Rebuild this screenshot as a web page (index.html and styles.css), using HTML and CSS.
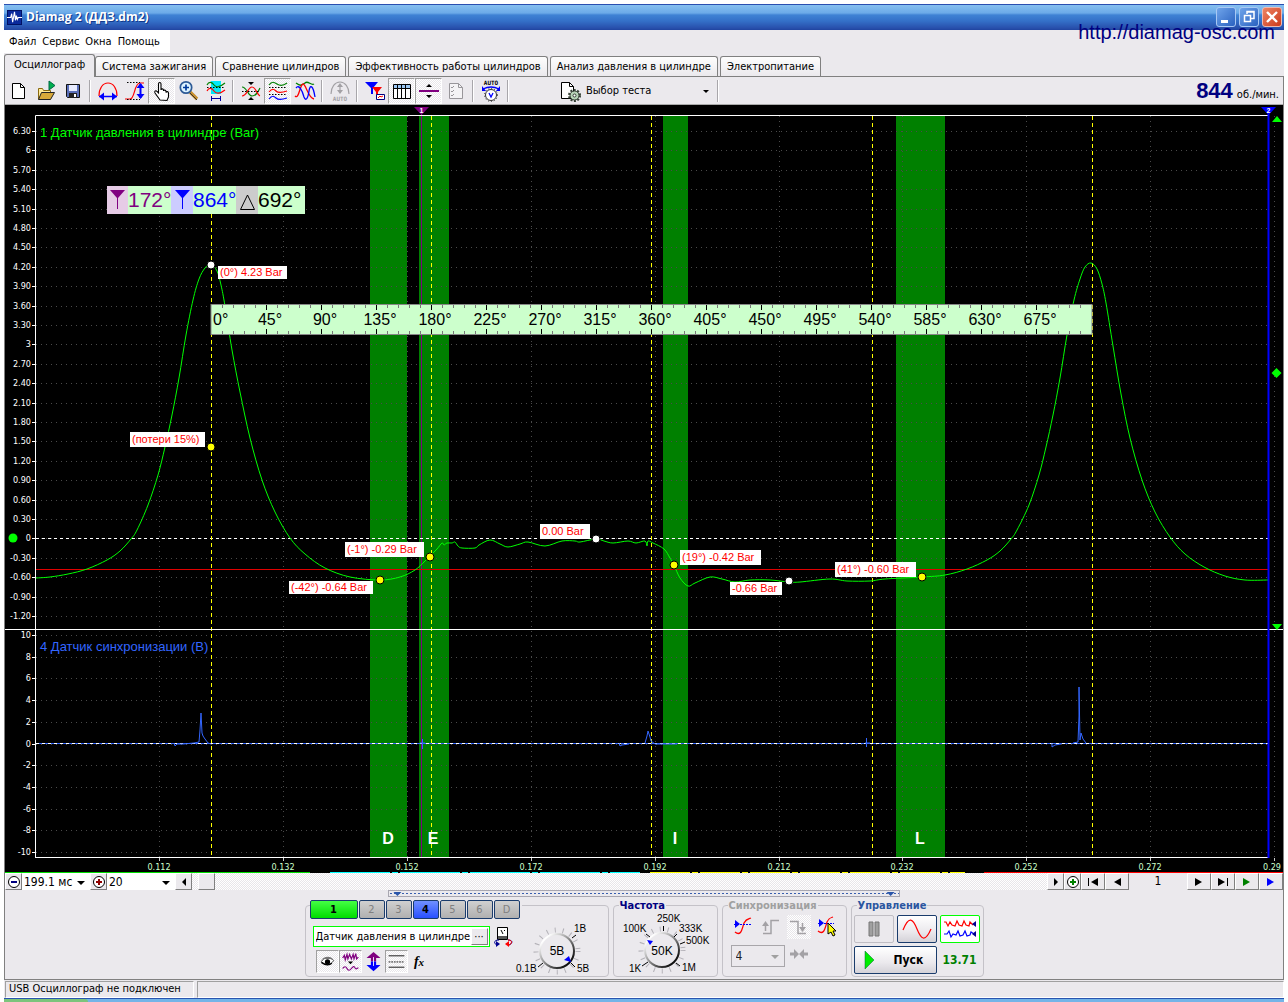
FILE: index.html
```html
<!DOCTYPE html>
<html lang="ru">
<head>
<meta charset="utf-8">
<title>Diamag 2 (ДДЗ.dm2)</title>
<link rel="stylesheet" href="styles.css">
</head>
<body>
<div class="window">
  <header class="titlebar">
    <svg class="app-icon" viewBox="0 0 16 16"><rect width="16" height="16" fill="#0a2a9c"/><rect x=".5" y=".5" width="15" height="15" fill="none" stroke="#001060"/><path d="M0 8h4l1-4 1 9 2-11 1 9 1-5 1 4 1-2h4" fill="none" stroke="#fff" stroke-width="1.2"/></svg>
    <h1>Diamag 2 (ДДЗ.dm2)</h1>
    <div class="win-buttons">
      <button class="win-btn" aria-label="Свернуть"><svg viewBox="0 0 18 18"><path d="M4 12h7v3H4z" fill="#fff"/></svg></button>
      <button class="win-btn" aria-label="Восстановить"><svg viewBox="0 0 18 18"><path d="M7 6V3.500h7v7h-3M4.500 7.500h6v6h-6zM4 7.500h7M7 4h7" fill="none" stroke="#fff" stroke-width="1.500"/></svg></button>
      <button class="win-btn close" aria-label="Закрыть"><svg viewBox="0 0 18 18"><path d="M4 4l10 10M14 4L4 14" stroke="#fff" stroke-width="2.400"/></svg></button>
    </div>
    <a class="site-link" href="http://diamag-osc.com">http://diamag-osc.com</a>
  </header>

  <nav class="menubar">
    <button>Файл</button><button>Сервис</button><button>Окна</button><button>Помощь</button>
  </nav>

  <nav class="tabs">
    <button class="tab active">Осциллограф</button>
    <button class="tab">Система зажигания</button>
    <button class="tab">Сравнение цилиндров</button>
    <button class="tab">Эффективность работы цилиндров</button>
    <button class="tab">Анализ давления в цилиндре</button>
    <button class="tab">Электропитание</button>
  </nav>

  <main class="panel">
    <div class="toolbar">
      <button class="tool" aria-label="Новый"><svg viewBox="0 0 24 24"><path d="M5.500 4.500h8l4 4v11h-12z" fill="#fff" stroke="#000"/><path d="M13.500 4.500v4h4" fill="none" stroke="#000"/></svg></button>
      <button class="tool" aria-label="Открыть"><svg viewBox="0 0 24 24"><path d="M4.500 20V9.500h4l1 2h7V20z" fill="#ffeb9c" stroke="#8a6a10"/><path d="M4.500 20.500l3-7h13l-4 7z" fill="#d8a93a" stroke="#222"/><path d="M15 2v9l6-4.500z" fill="#00b050" stroke="#064"/></svg></button>
      <button class="tool" aria-label="Сохранить"><svg viewBox="0 0 24 24"><path d="M5.500 5.500h13v13h-12l-1-1z" fill="#5b6fb8" stroke="#111"/><path d="M8 6h8v6H8z" fill="#e8ecff"/><path d="M8 14h8v5H8z" fill="#222"/><path d="M13 15h2v3h-2z" fill="#fff"/></svg></button>
      <span class="sep"></span>
      <button class="tool" aria-label="Период"><svg viewBox="0 0 24 24"><path d="M3 17C3 9 7 4 12 4s9 5 9 13" fill="none" stroke="red" stroke-width="1.200"/><path d="M3 17.500h18" stroke="#00f" stroke-width="1.500"/><path d="M3 17.500l5-4v8zM21 17.500l-5-4v8z" fill="#00f"/></svg></button>
      <button class="tool" aria-label="Амплитуда"><svg viewBox="0 0 24 24"><path d="M2 20h5c5 0 4-16 10-16h4" fill="none" stroke="red" stroke-width="1.200"/><path d="M4 3.500h13M4 20.500h13" stroke="#000" stroke-dasharray="1.500 1.500"/><path d="M17.500 5v14" stroke="#00f" stroke-width="2"/><path d="M17.500 4l4 5h-8zM17.500 20l4-5h-8z" fill="#00f"/></svg></button>
      <button class="tool on" aria-label="Рука"><svg viewBox="0 0 24 24"><path d="M10 21l-5-7c-1-2 1-3 2-1.500L8.500 14V5c0-2 2.500-2 2.500 0v6c0-1.500 2.500-1.500 2.500 0v1c0-1.500 2.500-1 2.500.5v1c.5-1.500 2.500-1 2.500.5v4l-1.500 3.500z" fill="#fff" stroke="#000" stroke-width="1.100"/></svg></button>
      <button class="tool" aria-label="Лупа"><svg viewBox="0 0 24 24"><path d="M13 13l7 7" stroke="#c89030" stroke-width="3.500"/><path d="M13 14l7 7" stroke="#333"/><circle cx="9" cy="8.500" r="5.700" fill="#dcf3ff" stroke="#2d5a96" stroke-width="1.700"/><path d="M6 8.500h6M9 5.500v6" stroke="#003a9c" stroke-width="1.700"/></svg></button>
      <button class="tool" aria-label="Интервал"><svg viewBox="0 0 24 24"><path d="M7 2h10v13H7z" fill="#00e8f8"/><path d="M3 6c2-4 5-3 7 0s6 2 11-2" fill="none" stroke="#008000" stroke-width="1.200"/><path d="M3 12c2-4 5-3 7 0s6 3 11-1" fill="none" stroke="red" stroke-width="1.200"/><path d="M3 8.500h18" stroke="#000" stroke-dasharray="1.500 1.500"/><path d="M7 19.500h10M7.500 17v5M16.500 17v5" stroke="#0000a0"/></svg></button>
      <span class="sep"></span>
      <button class="tool" aria-label="Свести"><svg viewBox="0 0 24 24"><path d="M3 8c5 0 6 9 10 9 4 0 6-4 8-8" fill="none" stroke="#008000" stroke-width="1.200"/><path d="M3 17C8 17 9 8 13 8c4 0 5 8 8 9" fill="none" stroke="red" stroke-width="1.200"/><path d="M3 12.500h18" stroke="#000" stroke-dasharray="1.500 1.500"/><path d="M12 6L9 3h6zM12 18l-3 3h6z"/></svg></button>
      <button class="tool on" aria-label="Развести"><svg viewBox="0 0 24 24" fill="none" stroke-width="1.200"><path d="M3 6c3-4 5-3 8-1s6 2 10-1" stroke="#008000"/><path d="M3 13c3-4 5-3 7-1s5 2 11 0" stroke="red"/><path d="M3 20c3-4 5-3 7-1s5 2 11 0" stroke="#00f"/><path d="M3 8.500h18M3 15.500h18" stroke="#000" stroke-dasharray="1.500 1.500"/></svg></button>
      <button class="tool" aria-label="Наложить"><svg viewBox="0 0 24 24" fill="none" stroke-width="1.300"><path d="M3 4c4 3 5 3 9 0 3-3 6 3 9 1" stroke="#008000"/><path d="M2 17c4 4 5-12 8-12s5 14 11 15" stroke="red"/><path d="M3 9c3-4 6 2 8 9 2 5 4 1 5-6s4-6 6 6" stroke="#00f"/></svg></button>
      <span class="sep"></span>
      <button class="tool" aria-label="Авто" disabled><svg viewBox="0 0 24 24"><path d="M3 15C3 8 7 3 12 3s9 5 9 12M12 6v8" fill="none" stroke="#a3a1a5" stroke-width="1.200"/><path d="M12 4l3 4H9zM12 15l3-4H9z" fill="#a3a1a5"/><text x="12" y="22" text-anchor="middle" class="t6" fill="#a3a1a5">AUTO</text></svg></button>
      <span class="sep"></span>
      <button class="tool" aria-label="Фильтр"><svg viewBox="0 0 24 24"><path d="M2 3h13l-5 6v6H8V9z" fill="#00f"/><path d="M9 8h10l-4 5v4l-2-1v-3z" fill="red"/><path d="M13.500 15.500h8v5h-8z" fill="#fff" stroke="#000080"/><path d="M15 19l2-2 1 1 2-1" fill="none" stroke="red"/></svg></button>
      <button class="tool on" aria-label="Таблица"><svg viewBox="0 0 24 24"><path d="M3.500 5.500h17v14h-17z" fill="#fff" stroke="#000"/><path d="M4 6h16v3H4z" fill="#9cc8f4"/><path d="M3 9.500h18M7.500 6v14M11.500 6v14M15.500 6v14" stroke="#000"/></svg></button>
      <button class="tool on" aria-label="Граница"><svg viewBox="0 0 24 24"><path d="M2 11h20v2H2z" fill="#800080"/><path d="M12 5l3 3H9zM12 19l3-3H9z"/></svg></button>
      <button class="tool" aria-label="Список" disabled><svg viewBox="0 0 24 24"><path d="M5.500 4.500h9l4 4v11h-13z" fill="#f4f3f5" stroke="#98969a"/><path d="M14.500 4.500v4h4M7 8l1 1 2-2M7 12l1 1 2-2M7 16l1 1 2-2" fill="none" stroke="#98969a"/></svg></button>
      <span class="sep"></span>
      <button class="tool" aria-label="Авто напряжение"><svg viewBox="0 0 24 24"><text x="12" y="6" text-anchor="middle" class="t6">AUTO</text><path d="M4 10q8-4 16 0" fill="none" stroke="#00f" stroke-width="1.300"/><path d="M3 7v5h4zM21 7v5h-4z" fill="#00f"/><circle cx="12" cy="16" r="5.500" fill="#fff" stroke="#333"/><circle cx="12" cy="16" r="6.500" fill="none" stroke="#333" stroke-dasharray="1 2"/><path d="M10 14l2 4 2-4" fill="none" stroke="#00f" stroke-width="1.300"/></svg></button>
      <span class="sep"></span>
      <label class="test-pick">
        <svg viewBox="0 0 24 24"><path d="M3.500 3.500h8l4 4v12h-12z" fill="#fff" stroke="#000"/><path d="M11.500 3.500v4h4" fill="none" stroke="#000"/><circle cx="16.500" cy="16.500" r="4.500" fill="#b8d4b8" stroke="#354035"/><circle cx="16.500" cy="16.500" r="5.500" fill="none" stroke="#354035" stroke-width="2" stroke-dasharray="2 1.500"/><circle cx="16.500" cy="16.500" r="1.500" fill="#fff" stroke="#354035"/></svg>
        <select aria-label="Выбор теста"><option>Выбор теста</option></select>
      </label>
      <span class="sep"></span>
      <div class="rpm"><strong>844</strong> об./мин.</div>
    </div>

    <svg class="chart" viewBox="5 105 1278 768" role="img" aria-label="Осциллограмма">
      <rect x="5" y="105" width="1278" height="768"/>
      <g fill="#008000"><rect x="370" y="116" width="37" height="741"/><rect x="419" y="116" width="30" height="741"/><rect x="663" y="116" width="25" height="741"/><rect x="896" y="116" width="49" height="741"/></g>
      <g id="grid"></g>
      <path d="M421.500 114v743" stroke="#800080"/>
      <path d="M36 538.500h1232" stroke="#fff" stroke-dasharray="3 3"/>
      <path d="M36 569.500h1232" stroke="#e00000"/>
      <path d="M211.500 116v741M431.500 116v741M651.500 116v741M872.500 116v741M1092.500 116v741" stroke="#ff0" stroke-dasharray="4 3"/>
      <path id="pressure" class="trace" stroke="#0f0"/>
      <path d="M36 743.500h1232" stroke="#36f"/>
      <path d="M36 743.500h1232" stroke="#fff" stroke-dasharray="3 3"/>
      <path class="trace" stroke="#36f" d="M174 743l1 3 2-2h6l11-1 5-1 1-12 1-17 1 20 1 3 2 3 3 4 3 1M420 743h5M422.500 739v10M619 743l1 3 2-1 7-1M645 743l2-7 1-5 2 6 1 4 4 3h22M866.500 738v9M865 743h5M1052 743v4l3-2 6-1M1073 743l5-1 1-26v-29l1 53 1-7 2 6 3 4"/>
      <path d="M35.500 857V115.500H1268M35 857.500h1234M5 629.500h1278" fill="none" stroke="#fff"/>
      <path d="M1268.500 112v746" stroke="#00f" stroke-width="2"/>
      <g id="axes"></g>
      <path d="M414 107h15l-7.500 8z" fill="#800080"/><path d="M1261 107h15l-7.500 8z" fill="#00f"/>
      <text x="421.500" y="113" class="mark">1</text><text x="1268.500" y="113" class="mark">2</text>
      <g fill="#0f0"><circle cx="13" cy="538" r="4.500"/><path d="M1272 122h10l-5-6zM1272 624h10l-5 6zM1271.500 373l5-5 5 5-5 5z"/></g>
      <text x="40" y="137" class="channel" fill="#0f0">1 Датчик давления в цилиндре (Bar)</text>
      <text x="40" y="651" class="channel" fill="#36f">4 Датчик синхронизации (В)</text>
      <g class="band"><text x="388" y="844">D</text><text x="433" y="844">E</text><text x="675" y="844">I</text><text x="920" y="844">L</text></g>
      <rect x="107" y="186" width="198" height="28" fill="#cfc"/>
      <rect x="107" y="186" width="21" height="28" fill="#e6cbe6"/><rect x="171" y="186" width="22" height="28" fill="#ccf"/><rect x="236" y="186" width="22" height="28" fill="#ccc"/>
      <path d="M110 190h15l-7 8v11h-1v-11z" fill="#800080"/><path d="M175 190h15l-7 8v11h-1v-11z" fill="#00f"/>
      <path d="M240.500 209.500h14L247.500 195z" fill="none" stroke="#000"/>
      <g class="readout"><text x="128" y="207" fill="#800080">172°</text><text x="193" y="207" fill="#00f">864°</text><text x="258" y="207">692°</text></g>
      <rect x="211" y="304.500" width="881" height="30" fill="#cfc" stroke="#888"/>
      <g id="ruler"></g>
      <g id="callouts"></g>
      <path d="M5 872.500h305" stroke="#0d0"/><path d="M330 872.500h310" stroke="#0ff" stroke-dasharray="60 2 6 2"/><path d="M650 872.500h315" stroke="#ff0" stroke-dasharray="40 2 6 2"/><path d="M984 872.500h299" stroke="red"/>
    </svg>

    <div class="scrollrow">
      <button class="sb" aria-label="Уменьшить"><svg viewBox="0 0 16 16"><circle cx="8" cy="8" r="5.500" fill="#fff" stroke="#000"/><path d="M5 7h6v2H5z" fill="#000080"/></svg></button>
      <span class="pick wide"><select aria-label="Развертка"><option>199.1 мс</option></select></span>
      <button class="sb" aria-label="Увеличить"><svg viewBox="0 0 16 16"><circle cx="8" cy="8" r="5.500" fill="#fff" stroke="#000"/><path d="M5 7h6v2H5zM7 5h2v6H7z" fill="#900000"/></svg></button>
      <span class="pick wide"><select aria-label="Масштаб"><option>20</option></select></span>
      <button class="sb" aria-label="Влево"><svg viewBox="0 0 16 16"><path d="M10 4v8L6 8z"/></svg></button>
      <div class="track"><span class="thumb"></span></div>
      <button class="sb" aria-label="Вправо"><svg viewBox="0 0 16 16"><path d="M6 4v8l4-4z"/></svg></button>
      <button class="sb" aria-label="Добавить"><svg viewBox="0 0 16 16"><circle cx="8" cy="8" r="5.500" fill="#fff" stroke="#000"/><path d="M5 7h6v2H5zM7 5h2v6H7z" fill="#008000"/></svg></button>
      <button class="sb nav" aria-label="В начало"><svg viewBox="0 0 16 16"><path d="M3 4h1v8H3zM13 4v8L6 8z"/></svg></button>
      <button class="sb nav" aria-label="Назад"><svg viewBox="0 0 16 16"><path d="M12 4v8L5 8z"/></svg></button>
      <output class="page">1</output>
      <button class="sb nav" aria-label="Вперед"><svg viewBox="0 0 16 16"><path d="M4 4v8l7-4z"/></svg></button>
      <button class="sb nav" aria-label="В конец"><svg viewBox="0 0 16 16"><path d="M3 4v8l7-4zM12 4h1v8h-1z"/></svg></button>
      <button class="sb nav" aria-label="Просмотр"><svg viewBox="0 0 16 16"><path d="M4 4v8l7-4z" fill="#008000"/></svg></button>
      <button class="sb nav" aria-label="Запись"><svg viewBox="0 0 16 16"><path d="M4 4v8l7-4z" fill="#00f"/></svg></button>
    </div>
    <div class="splitter"></div>

    <div class="controls">
      <section class="group channel-group">
        <div>
          <div class="channels">
            <button class="ch one">1</button><button class="ch">2</button><button class="ch">3</button><button class="ch four">4</button><button class="ch">5</button><button class="ch">6</button><button class="ch">D</button>
          </div>
          <div class="sensor-row">
            <div class="sensor"><input aria-label="Датчик" value="Датчик давления в цилиндре"><button>···</button></div>
            <svg width="20" height="22" viewBox="0 0 20 22"><path d="M4.500 1.500h10v12h-10z" fill="#fff" stroke="#000"/><path d="M5 10h9v3H5z" fill="#555"/><path d="M8 4l2 4M12 4l-1 1" stroke="#000"/><path d="M6 14c-6 0-5 4-2 5M15 14c6 0 4 4 1 5" fill="none" stroke="#000090"/><path d="M3 15v6l4-3z" fill="#000090"/><path d="M15 14c5 0 4 4 1 5" fill="none" stroke="red"/><path d="M16 15v6l-4-3z" fill="red"/></svg>
          </div>
          <div class="options">
            <button class="tool on" aria-label="Видимость"><svg viewBox="0 0 24 24"><path d="M5 12c3-5 10-6 14-1-4 6-10 6-14 1z" fill="#fff" stroke="#333"/><path d="M5 10c4-4 10-5 14 0l-4-1H8z" fill="#777"/><circle cx="12" cy="12.500" r="3"/><path d="M5 13q7 5 12 1" fill="none" stroke="#000" stroke-width="1.500"/></svg></button>
            <button class="tool on" aria-label="Сглаживание"><svg viewBox="0 0 24 24"><path d="M3 8l2-3 1 5 2-6 1 5 2-5 2 5 2-5 1 5 2-6 1 6 2-2M3 20q3-4 5 0t5 0 4-1 4 0" fill="none" stroke="#800080" stroke-width="1.400"/><path d="M9 12h6l-3 3z"/></svg></button>
            <button class="tool" aria-label="Сдвиг"><svg viewBox="0 0 24 24"><path d="M12 1l8 7h-5v4H9V8H4z" fill="#800080"/><path d="M12 23l8-7h-5v-4H9v4H4z" fill="#00f"/><path d="M12 7v10" stroke="#fff"/></svg></button>
            <button class="tool on" aria-label="Линии"><svg viewBox="0 0 24 24" stroke="#000"><path d="M3 5.500h18M3 18.500h18"/><path d="M3 12.500h18" stroke-dasharray="2 1"/></svg></button>
            <button class="tool fx" aria-label="Функция">f<sub>x</sub></button>
          </div>
        </div>
        <svg class="knob" width="86" height="66" viewBox="514 912 86 66">
          <defs><linearGradient id="rim" x1="0" y1="0" x2="1" y2="1"><stop offset=".15" stop-color="#fff"/><stop offset=".9" stop-color="#000"/></linearGradient></defs>
          <circle cx="557" cy="951" r="21" class="notches"/><circle cx="557" cy="951" r="17" fill="#ebe9ed" stroke="url(#rim)" stroke-width="2"/>
          <path d="M572 938l4-3M543 963l-5 4M571 963l4 4" stroke="#000"/><path d="M564 960l5-4 2 6z" fill="#00f"/>
          <text x="557" y="955" class="val">5В</text><text x="574" y="932">1В</text><text x="516" y="972">0.1В</text><text x="577" y="972">5В</text>
        </svg>
      </section>
      <section class="group freq">
        <h2>Частота</h2>
        <svg class="knob" width="102" height="64" viewBox="612 913 102 64">
          <circle cx="660" cy="950" r="21" class="notches"/><circle cx="660" cy="950" r="17" fill="#ebe9ed" stroke="url(#rim)" stroke-width="2"/>
          <path d="M661.500 926v5M644 934l4 3M675 934l-3 3M678 944l5-2M646 962l-6 4M674 963l4 3" stroke="#000"/><path d="M645 940l6 1-3 4z" fill="#00f"/>
          <text x="660" y="955" class="val">50K</text><text x="655" y="922">250K</text><text x="621" y="932">100K</text><text x="677" y="932">333K</text><text x="684" y="944">500K</text><text x="627" y="972">1K</text><text x="680" y="971">1M</text>
        </svg>
      </section>
      <section class="group sync">
        <h2>Синхронизация</h2>
        <div class="row">
          <button class="tool" aria-label="Уровень"><svg viewBox="0 0 24 24"><path d="M4 17c6 5 7-3 9-9 2-4 4-4 7-5" fill="none" stroke="red" stroke-width="1.300"/><path d="M3 9.500h17" stroke="#00f" stroke-dasharray="2 1"/><path d="M4 5v8l5-4z" fill="#00f"/></svg></button>
          <button class="tool" aria-label="Фронт" disabled><svg viewBox="0 0 24 24"><path d="M4 18.500h8V5.500h8M6.500 8v8" fill="none" stroke="#a3a1a5" stroke-width="1.500"/><path d="M6.500 6l3.500 5H3z" fill="#a3a1a5"/></svg></button>
          <button class="tool hatch" aria-label="Спад" disabled><svg viewBox="0 0 24 24"><path d="M3 6.500h8v12h8M15.500 8v8" fill="none" stroke="#a3a1a5" stroke-width="1.500"/><path d="M15.500 17l3.500-5h-7z" fill="#a3a1a5"/></svg></button>
          <button class="tool" aria-label="Захват"><svg viewBox="0 0 24 24"><path d="M3 16c6 5 7-3 9-9 2-4 3-4 6-5" fill="none" stroke="red" stroke-width="1.300"/><path d="M3 8.500h16" stroke="#00f" stroke-dasharray="2 1"/><path d="M4 4v8l5-4z" fill="#00f"/><path d="M13 8v11l3-2 2 4 2-1-2-4h3z" fill="#ff0" stroke="#000"/></svg></button>
        </div>
        <div class="row">
          <span class="pick sync-pick"><select aria-label="Канал синхронизации" disabled><option>4</option></select></span>
          <svg width="20" height="12" viewBox="0 0 20 12"><path d="M1 6h5M14 6h5" stroke="#a3a1a5" stroke-width="3"/><path d="M5 1v10l5-5zM15 1v10l-5-5z" fill="#a3a1a5"/></svg>
        </div>
      </section>
      <section class="group control">
        <h2>Управление</h2>
        <div class="buttons">
          <button class="big off" aria-label="Пауза" disabled><svg viewBox="0 0 36 24"><path d="M13 5h4v14h-4zM19 5h4v14h-4z" fill="#a0a0a0" stroke="#777"/></svg></button>
          <button class="big" aria-label="Синус"><svg viewBox="0 0 36 24"><path d="M4 13C10-2 14 2 18 12s8 14 14 0" fill="none" stroke="red" stroke-width="1.200"/></svg></button>
          <button class="big live" aria-label="Сигналы"><svg viewBox="0 0 36 24"><path d="M2 5h2l2 4 2-4 2 3 3 1 2-5 2 4 3 1 2-5 2 4 3 1 1-4 3 3" fill="none" stroke="red" stroke-width="1.200"/><path d="M2 17h3l2-3 2 6 2-3 3 1 2-4 2 5 3-1 2-4 2 5 3-1 1-3 3 2" fill="none" stroke="#00f" stroke-width="1.200"/><path d="M34 4v6l-4-3zM34 14v6l-4-3z" fill="#000090"/></svg></button>
          <button class="big start"><svg viewBox="0 0 12 20"><path d="M1 1v18l9-9z" fill="#0e0" stroke="#063" stroke-width=".5"/></svg>Пуск</button>
          <output class="volt">13.71</output>
        </div>
      </section>
    </div>
  </main>
  <footer class="status"><span>USB Осциллограф не подключен</span><span></span></footer>
</div>
<div class="taskbar"><span></span></div>
<script src="chart.js"></script>
</body>
</html>
```
FILE: styles.css
```css
* { box-sizing: border-box; }
body {
  margin: 0;
  background: #fff;
  color: #000;
  font: 11px/14px "DejaVu Sans Condensed", "Noto Sans", sans-serif;
}
button, input, select { font: inherit; color: inherit; margin: 0; padding: 0; border: 0; background: none; border-radius: 0; }
select { appearance: none; width: 100%; height: 100%; }
svg { display: block; }
h1, h2 { margin: 0; }

.window { margin: 4px 4px 0; background: #ebe9ed; }

.titlebar {
  position: relative;
  display: flex;
  align-items: center;
  height: 26px;
  padding: 0 2px 0 3px;
  background: linear-gradient(#2a4fb0 0 1px, #86c0f0 1px, #6caae8 9px, #3f82d4 11px, #3470c8 17px, #2850ac 24px, #2044a0);
}
.app-icon { width: 15px; height: 15px; }
.titlebar h1 { margin-left: 4px; color: #fff; font: bold 12px/20px "Open Sans", sans-serif; text-shadow: 1px 1px #123a8c; }
.win-buttons { display: flex; gap: 3px; margin-left: auto; }
.win-btn { width: 20px; height: 20px; border: 1px solid #a8c8f4; border-radius: 3px; background: linear-gradient(135deg, #6fa4ea, #2a62c0); }
.win-btn.close { border-color: #f0b8b0; background: linear-gradient(135deg, #ee8464, #cc3a1c); }
.site-link { position: absolute; right: 9px; top: 16px; color: #000080; font: 20px/24px "Liberation Sans", sans-serif; text-decoration: none; }

.menubar { display: flex; width: 166px; height: 23px; padding-left: 2px; background: #fff; }
.menubar button { padding: 0 3px; }

.tabs { display: flex; align-items: flex-end; gap: 2px; height: 23px; }
.tab { height: 20px; padding: 0 6px; border: 1px solid #808080; border-bottom: 0; border-radius: 3px 3px 0 0; background: linear-gradient(#fdfdfd, #ebe9ed); }
.tab.active { position: relative; height: 23px; margin: 0 -2px -1px 0; padding: 0 9px 2px; background: #ebe9ed; }

.panel { border: 1px solid #808080; }
.toolbar { display: flex; align-items: center; height: 28px; border-bottom: 1px solid #aaa; }
.tool { display: flex; align-items: center; justify-content: center; flex: none; width: 27px; height: 26px; }
.tool svg { flex: none; width: 24px; height: 24px; }
.tool.on { border: 1px solid; border-color: #a0a0a0 #fff #fff #a0a0a0; }
.tool.on, .hatch, .track { background: repeating-conic-gradient(#fff 0 25%, #e8e6ea 0 50%) 0 0 / 2px 2px; }
.t6 { font: bold 6px "DejaVu Sans Mono", monospace; }
.sep { flex: none; width: 2px; height: 22px; margin: 0 3px; border-left: 1px solid #a8a6aa; border-right: 1px solid #fff; }
.test-pick { position: relative; display: flex; align-items: center; width: 156px; height: 24px; margin-left: 46px; }
.test-pick svg { flex: none; width: 24px; height: 24px; margin-right: 4px; }
.test-pick::after, .pick::after { content: ""; position: absolute; right: 5px; top: 50%; margin-top: -1px; border: solid transparent; border-width: 4px 4px 0; border-top-color: #000; pointer-events: none; }
.test-pick::after { border-width: 3px 3px 0; }
.rpm { display: flex; align-items: baseline; gap: 4px; margin-left: auto; padding-right: 4px; }
.rpm strong { color: #000080; font: bold 22px/24px "Liberation Sans", sans-serif; }

.chart { width: 100%; height: auto; font-family: "DejaVu Sans Condensed", "Noto Sans", sans-serif; }
.trace { fill: none; stroke-width: 1; }
.tick { font-size: 9px; fill: #fff; text-anchor: end; }
.time { font-size: 9px; fill: #cfc; text-anchor: middle; }
.mark { font: bold 7px "Liberation Sans", sans-serif; fill: #fff; text-anchor: middle; }
.channel { font: 13px "Liberation Sans", sans-serif; }
.band { font: bold 16px "Liberation Sans", sans-serif; fill: #fff; text-anchor: middle; }
.readout { font: 21px "Liberation Sans", sans-serif; }
.degree { font: 16px "Liberation Sans", sans-serif; }
.callout { font: 11px "Liberation Sans", sans-serif; fill: red; }

.scrollrow { display: flex; height: 17px; }
.sb { display: flex; align-items: center; justify-content: center; flex: none; width: 17px; border: 1px solid; border-color: #fff #808080 #808080 #fff; }
.sb svg { width: 16px; height: 16px; flex: none; }
.sb.nav { width: 24px; }
.pick { position: relative; flex: none; font-size: 12px; }
.pick.wide { width: 68px; background: #fff; padding-left: 2px; }
.track { flex: 1; padding-left: 6px; }
.thumb { display: block; width: 17px; height: 17px; background: #ebe9ed; border: 1px solid; border-color: #fff #808080 #808080 #fff; }
.page { width: 58px; font-size: 12px; line-height: 17px; text-align: center; }

.splitter { display: flex; align-items: center; justify-content: space-between; width: 40%; height: 7px; margin: 0 auto; border: 1px solid #a8a6b0; background: radial-gradient(circle, #3a5fae 1px, transparent 1px) 0 0 / 4px 5px; }
.splitter::before, .splitter::after { content: ""; width: 16px; height: 5px; background: #2a55aa; clip-path: polygon(25% 20%, 75% 20%, 50% 100%); }

.controls { display: flex; justify-content: center; gap: 4px; height: 82px; padding-top: 8px; }
.group { height: 72px; border: 1px solid #c4c2c8; border-radius: 4px; }
.group h2 { width: max-content; margin: -7px 0 0 5px; padding: 0 1px; background: #ebe9ed; font: bold 11px/14px "DejaVu Sans Condensed", sans-serif; color: #000080; }
.channel-group { display: flex; justify-content: space-between; width: 304px; padding: 0 8px 0 4px; }
.channels { display: flex; gap: 1px; width: 212px; margin-top: -6px; background: #ebe9ed; }
.ch { width: 26px; height: 19px; border: 1px solid #1a3c6c; border-radius: 2px; background: linear-gradient(#d0d0d0, #b0b0b0); color: #808080; }
.ch.one { width: 48px; background: linear-gradient(#4f4, #0d0); color: #000; font-weight: bold; }
.ch.four { background: linear-gradient(#7090ff, #2850ff); color: #000; font-weight: bold; }
.sensor-row { display: flex; gap: 3px; margin: 7px 0 2px 3px; }
.sensor { display: flex; width: 177px; height: 21px; padding: 1px; border: 1px solid #0f0; background: #fff; }
.sensor input { flex: 1; min-width: 0; padding-left: 1px; }
.sensor button { width: 17px; border: 1px solid; border-color: #fff #808080 #808080 #fff; background: #ebe9ed; line-height: 8px; }
.options { display: flex; padding-left: 6px; }
.options .tool { width: 23px; height: 23px; }
.options .tool svg { width: 21px; height: 21px; }
.fx { font: italic bold 14px/16px "Liberation Serif", serif; }
.fx sub { font-size: 11px; }
.channel-group .knob { margin-left: -8px; }
.knob { margin-top: 6px; font: 10px "Liberation Sans", sans-serif; }
.knob .val { font-size: 12px; text-anchor: middle; }
.notches { fill: none; stroke: #b4b2b8; stroke-width: 5; stroke-dasharray: 1 7; }
.freq { width: 105px; }
.freq .knob { margin-top: 0; }
.sync { width: 125px; }
.sync h2 { color: #a0a0a0; }
.row { display: flex; align-items: center; gap: 4px; padding: 2px 8px 0; }
.sync .row .tool { width: 24px; height: 24px; }
.sync-pick { width: 54px; height: 22px; margin-top: 4px; padding-left: 4px; border: 1px solid #a8a6aa; }
.sync-pick select { color: #222; opacity: 1; }
.sync-pick::after { border-top-color: #a0a0a0; }
.control { width: 133px; }
.control h2 { color: #2a55a0; }
.buttons { display: grid; grid-template-columns: 40px 40px 40px; gap: 3px; padding: 2px 2px 0; }
.big { height: 28px; border: 1px solid #1a3c6c; border-radius: 2px; background: linear-gradient(#fff, #ebe9ed 60%, #d4d2d8); }
.big svg { width: 36px; height: 24px; margin: auto; }
.big.off { border-color: #c0bec4; background: #ebe9ed; }
.big.live { border-color: #0f0; background: #fff; }
.big.start { display: flex; align-items: center; grid-column: span 2; padding-left: 9px; font: bold 12px "DejaVu Sans Condensed", sans-serif; gap: 18px; }
.big.start svg { width: 12px; height: 20px; margin: 0; }
.volt { align-self: center; text-align: center; color: #008000; font: bold 12px "DejaVu Sans Condensed", sans-serif; }

.status { display: flex; gap: 3px; height: 18px; padding: 1px 0 0 1px; }
.status span { height: 17px; padding: 0 3px; border: 1px solid; border-color: #a0a0a0 #fff #fff #a0a0a0; }
.status span:first-child { width: 189px; white-space: nowrap; }
.status span:last-child { flex: 1; }
.taskbar { height: 4px; margin: 0 4px; border-top: 1px solid #2a55b0; background: #74b4e8; }
.taskbar span { display: block; width: 84px; height: 3px; border-radius: 0 3px 0 0; background: #7cc47c; }
```
FILE: chart.js
```js
const NS = 'http://www.w3.org/2000/svg';

function add(parentId, tag, attrs, text) {
  const el = document.createElementNS(NS, tag);
  for (const name in attrs) el.setAttribute(name, attrs[name]);
  if (text !== undefined) el.textContent = text;
  document.getElementById(parentId).appendChild(el);
}

const dots = { stroke: '#4a4a4a', 'stroke-dasharray': '1 4', fill: 'none' };

function level(y, label) {
  add('grid', 'path', { d: `M36 ${y}.5h1232`, ...dots });
  add('axes', 'path', { d: `M32 ${y}.5h4`, stroke: '#fff' });
  add('axes', 'text', { x: 31, y: y + 3, class: 'tick' }, label);
}

// Pressure scale, 0.30 bar per division
for (let i = 0; i < 26; i++) {
  const value = (63 - i * 3) / 10;
  level(Math.round(131 + i * 19.4), Number.isInteger(value) ? value : value.toFixed(2));
}
// Sync sensor scale, 2 V per division
for (let i = 0; i < 11; i++) level(Math.round(635 + i * 21.7), 10 - i * 2);

// Time scale; the last label has room for two decimals only
for (let i = 0; i < 10; i++) {
  const x = Math.round(159 + i * 123.9);
  add('grid', 'path', { d: `M${x}.5 116v741`, ...dots });
  add('axes', 'path', { d: `M${x}.5 858v3`, stroke: '#ccc' });
  add('axes', 'text', { x: i < 9 ? x : 1272, y: 870, class: 'time' }, (0.112 + i * 0.02).toFixed(i < 9 ? 3 : 2));
}

// Crank angle ruler
for (let i = 1; i < 80; i++) {
  const x = 211 + i * 11;
  const major = i % 5 === 0;
  const h = major ? 5 : 3;
  add('ruler', 'path', { d: `M${x}.5 305v${h}M${x}.5 334v-${h}`, stroke: major ? '#000' : '#777' });
}
for (let a = 0; a <= 675; a += 45) {
  const x = 211 + a / 45 * 55;
  add('ruler', 'text', { x: a ? x + 4 : 213, y: 325, class: 'degree', 'text-anchor': a ? 'middle' : 'start' }, a + '°');
}

const points = [
  [36,578],[50,577],[68,574],[87,569],[107,560],[120,551],[131,539],[137,530],[148,505],[158,475],[165,447],[172,415],[179,378],[186,335],[193,300],[199,279],[205,268],[211,264],
  [217,271],[221,285],[225,306],[232,350],[240,392],[250,438],[262,480],[275,512],[290,538],[305,554],[325,568],[350,577],[380,580],[400,577],[415,570],[425,561],[431,555],[437,549],[442,543],
  [444,545],[447,543],[452,543],[455,542],[458,546],[462,548],[475,548],[479,545],[490,540],[500,544],[508,547],[520,544],[528,542],[545,546],[562,541],[575,541],[580,542],[596,539],[604,541],[613,543],[628,541],[636,543],[645,541],[647,546],[648,541],[653,543],
  [664,549],[670,558],[674,565],[680,578],[688,586],[695,583],[710,577],[722,579],[735,582],[750,580],[770,580],[789,582],[800,582],[830,579],[847,581],[870,581],[885,579],[922,577],
  [945,575],[967,569],[987,560],[1000,551],[1011,539],[1017,530],[1029,505],[1039,475],[1046,447],[1053,415],[1060,378],[1067,335],[1074,300],[1080,279],[1085,267],[1091,263],
  [1097,269],[1102,284],[1106,303],[1113,346],[1121,394],[1130,438],[1142,480],[1155,512],[1170,537],[1185,554],[1204,567],[1225,576],[1245,580],[1268,580],
];

// Smooth curve through the samples
let d = `M${points[0]}`;
for (let i = 0; i < points.length - 1; i++) {
  const p0 = points[Math.max(i - 1, 0)];
  const [p1, p2] = [points[i], points[i + 1]];
  const p3 = points[Math.min(i + 2, points.length - 1)];
  const c = (a, b, e, s) => [a[0] + s * (e[0] - b[0]) / 6, a[1] + s * (e[1] - b[1]) / 6];
  d += `C${c(p1, p0, p2, 1)} ${c(p2, p1, p3, -1)} ${p2}`;
}
document.getElementById('pressure').setAttribute('d', d);

[
  [218, 266, 69, 13, '(0°) 4.23 Bar', 211, 265, '#fff'],
  [130, 432, 75, 15, '(потери 15%)', 211, 447, '#ff0'],
  [345, 542, 79, 15, '(-1°) -0.29 Bar', 430, 557, '#ff0'],
  [289, 581, 84, 13, '(-42°) -0.64 Bar', 380, 580, '#ff0'],
  [540, 524, 50, 15, '0.00 Bar', 596, 539, '#fff'],
  [680, 550, 81, 15, '(19°) -0.42 Bar', 674, 565, '#ff0'],
  [730, 582, 52, 13, '-0.66 Bar', 789, 581, '#fff'],
  [835, 562, 81, 15, '(41°) -0.60 Bar', 922, 577, '#ff0'],
].forEach(([x, y, width, height, text, cx, cy, fill]) => {
  add('callouts', 'rect', { x, y, width, height, fill: '#fff' });
  add('callouts', 'text', { x: x + 2, y: y + (height > 13 ? 11 : 10), class: 'callout' }, text);
  add('callouts', 'circle', { cx, cy, r: 4, fill, stroke: '#000' });
});
```
